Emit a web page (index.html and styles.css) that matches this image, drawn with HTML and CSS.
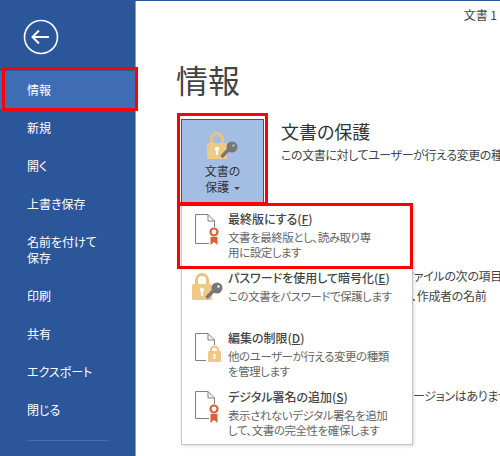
FILE: index.html
```html
<!DOCTYPE html>
<html lang="ja">
<head>
    <meta charset="UTF-8">
    <title>情報</title>
    <link rel="stylesheet" href="styles.css">
</head>
<body>
    <div class="app">
        <aside class="sidebar">
            <a class="back" href="#">
                <svg width="36" height="36" viewBox="0 0 36 36">
                    <circle cx="18" cy="18" r="16.500" fill="none" stroke="#fff" stroke-width="1.600"/>
                    <path d="M9.500 18H26M16 11.500L9.500 18L16 24.500" fill="none" stroke="#fff" stroke-width="2"/>
                </svg>
            </a>
            <nav class="nav">
                <a class="nav-item active" href="#">情報</a>
                <a class="nav-item" href="#">新規</a>
                <a class="nav-item" href="#">開く</a>
                <a class="nav-item" href="#">上書き保存</a>
                <a class="nav-item tall" href="#">名前を付けて<br>保存</a>
                <a class="nav-item" href="#">印刷</a>
                <a class="nav-item" href="#">共有</a>
                <a class="nav-item" href="#">エクスポート</a>
                <a class="nav-item" href="#">閉じる</a>
            </nav>
            <div class="nav-line"></div>
        </aside>

        <main class="content">
            <div class="doc-name">文書 1</div>
            <h1 class="title">情報</h1>

            <section class="row">
                <button class="protect-btn">
                    <svg class="btn-icon" width="31" height="28" viewBox="0 0 31 28">
                        <path d="M4.500 13V8a5.500 5.500 0 0 1 11 0v5" fill="none" stroke="#eec27c" stroke-width="3"/>
                        <rect x="0" y="12" width="20" height="16" rx="1.500" fill="#f0c987"/>
                        <circle cx="10" cy="18" r="2.200" fill="#fff"/>
                        <rect x="9" y="19" width="2" height="5" fill="#fff"/>
                        <path d="M24 16L14.500 26" stroke="#777" stroke-width="3.500"/>
                        <circle cx="25" cy="16" r="5.500" fill="#777"/>
                        <circle cx="26.500" cy="14.500" r="1.200" fill="#a3bde3"/>
                    </svg>
                    <span>文書の</span>
                    <span>保護 <i class="caret"></i></span>
                </button>
                <div class="row-text">
                    <h2>文書の保護</h2>
                    <p>この文書に対してユーザーが行える変更の種類を管理します。</p>
                </div>
            </section>

            <p class="behind behind-a">ファイルの次の項目を確認します。</p>
            <p class="behind behind-b">、作成者の名前</p>
            <p class="behind behind-c">バージョンはありません。</p>
        </main>

        <ul class="menu">
            <li class="menu-item">
                <svg class="menu-icon" width="34" height="36" viewBox="0 0 34 36">
                    <path d="M20.500 14V8L14 1.500H1.500V30.500H15M14 1.500V8H20.500" fill="none" stroke="#7f7f7f"/>
                    <circle cx="20" cy="19" r="3.500" fill="none" stroke="#d9603b" stroke-width="2.200"/>
                    <path d="M16.500 24H23.500V32L20 29L16.500 32Z" fill="#d9603b"/>
                </svg>
                <div>
                    <b>最終版にする(<u>F</u>)</b>
                    <p>文書を最終版とし、読み取り専<br>用に設定します</p>
                </div>
            </li>
            <li class="menu-item">
                <svg class="menu-icon lock-icon" width="37" height="36" viewBox="0 0 37 36">
                    <path d="M5.500 13V8a5.500 5.500 0 0 1 11 0v5" fill="none" stroke="#eec27c" stroke-width="3"/>
                    <rect x="1" y="12" width="20" height="16" rx="1.500" fill="#f0c987"/>
                    <circle cx="11" cy="18" r="2.200" fill="#fff"/>
                    <rect x="10" y="19" width="2" height="5" fill="#fff"/>
                    <path d="M25 16L15.500 26" stroke="#777" stroke-width="3.500"/>
                    <circle cx="26" cy="16" r="5.500" fill="#777"/>
                    <circle cx="27.500" cy="14.500" r="1.200" fill="#fff"/>
                </svg>
                <div>
                    <b>パスワードを使用して暗号化(<u>E</u>)</b>
                    <p>この文書をパスワードで保護します</p>
                </div>
            </li>
            <li class="menu-item">
                <svg class="menu-icon" width="34" height="36" viewBox="0 0 34 36">
                    <path d="M20.500 13V8L14 1.500H1.500V28.500H12M14 1.500V8H20.500" fill="none" stroke="#7f7f7f"/>
                    <path d="M17 19V18a3.500 3.500 0 0 1 7 0v1" fill="none" stroke="#eec27c" stroke-width="2"/>
                    <rect x="14" y="19" width="13" height="11" rx="1" fill="#f0c987"/>
                    <rect x="19.500" y="22" width="2" height="5" fill="#fff"/>
                </svg>
                <div>
                    <b>編集の制限(<u>D</u>)</b>
                    <p>他のユーザーが行える変更の種類<br>を管理します</p>
                </div>
            </li>
            <li class="menu-item">
                <svg class="menu-icon" width="34" height="36" viewBox="0 0 34 36">
                    <path d="M20.500 13V7L14 0.500H1.500V27.500H15M14 0.500V7H20.500" fill="none" stroke="#7f7f7f"/>
                    <circle cx="20" cy="18" r="3.500" fill="none" stroke="#d9603b" stroke-width="2.200"/>
                    <path d="M16.500 23H23.500V32L20 29L16.500 32Z" fill="#d9603b"/>
                </svg>
                <div>
                    <b>デジタル署名の追加(<u>S</u>)</b>
                    <p>表示されないデジタル署名を追加<br>して、文書の完全性を確保します</p>
                </div>
            </li>
        </ul>

        <div class="mark mark-nav"></div>
        <div class="mark mark-btn"></div>
        <div class="mark mark-item"></div>
    </div>
</body>
</html>
```

FILE: styles.css
```css
html, body {
    margin: 0;
    padding: 0;
}
body {
    font-family: "Noto Sans CJK JP", "Noto Sans", sans-serif;
    font-feature-settings: "palt";
    color: #444;
    background: #fff;
}
.app {
    position: relative;
    display: flex;
    width: 500px;
    height: 456px;
    overflow: hidden;
    border-top: 1px solid #2b579a;
    box-sizing: border-box;
}

/* left bar */
.sidebar {
    flex: 0 0 136px;
    box-sizing: border-box;
    background: #2b579a;
    border-right: 1px solid #7f9fd0;
}
.back {
    display: block;
    height: 52px;
    padding: 18px 0 0 23px;
}
.nav-item {
    display: flex;
    align-items: center;
    height: 38px;
    padding-left: 27px;
    color: #fff;
    font-size: 12px;
    line-height: 16px;
    text-decoration: none;
}
.nav-item.active {
    background: #3e6db5;
}
.nav-item.tall {
    height: 54px;
}
.nav-line {
    width: 82px;
    height: 1px;
    margin: 11px 0 0 27px;
    background: #3e6db5;
}

/* main area */
.content {
    position: relative;
    flex: 1;
    min-width: 0;
    padding-left: 42px;
}
.doc-name {
    position: absolute;
    top: 5px;
    right: 3px;
    font-size: 12px;
    color: #444;
}
.title {
    margin: 55px 0 0 -2px;
    font-size: 32px;
    font-weight: 400;
    line-height: 46px;
    color: #444;
}
.row {
    display: flex;
    gap: 17px;
    margin-top: 17px;
    margin-left: 3px;
}
.protect-btn {
    display: flex;
    flex: 0 0 83px;
    flex-direction: column;
    align-items: center;
    height: 90px;
    padding: 11px 0 0;
    box-sizing: border-box;
    background: #a3bde3;
    border: 1px solid #2b579a;
    border-bottom: 0;
    color: #333;
    font-family: inherit;
    font-feature-settings: inherit;
    font-size: 12px;
    line-height: 16px;
}
.btn-icon {
    margin-bottom: 4px;
}
.caret {
    display: inline-block;
    width: 0;
    height: 0;
    margin-left: 2px;
    vertical-align: middle;
    border: 3px solid transparent;
    border-top: 3px solid #444;
    border-bottom: 0;
}
.row-text h2 {
    margin: 0;
    font-size: 18px;
    font-weight: 400;
    line-height: 24px;
    white-space: nowrap;
    color: #333;
}
.row-text p {
    margin: 3px 0 0;
    font-size: 12px;
    line-height: 18px;
    letter-spacing: -0.4px;
    white-space: nowrap;
}
.behind {
    position: absolute;
    margin: 0;
    font-size: 12px;
    line-height: 18px;
    letter-spacing: -0.3px;
    white-space: nowrap;
}
.behind-a { top: 266px; left: 268px; }
.behind-b { top: 286px; left: 275px; }
.behind-c { top: 386px; left: 266px; }

/* dropdown */
.menu {
    position: absolute;
    top: 204px;
    left: 181px;
    width: 232px;
    height: 240px;
    margin: 0;
    padding: 5px 0 0;
    box-sizing: border-box;
    list-style: none;
    background: #fff;
    border: 1px solid #c6c6c6;
    box-shadow: 1px 1px 3px rgba(0, 0, 0, 0.15);
}
.menu-item {
    display: flex;
    height: 59.330px;
    padding-left: 12px;
    font-size: 12px;
    line-height: 16px;
}
.menu-icon {
    flex: 0 0 auto;
    margin-top: 2px;
}
.lock-icon {
    margin-left: -3px;
}
.menu-item b {
    display: block;
    font-weight: 500;
    white-space: nowrap;
    color: #444;
}
.menu-item p {
    margin: 3px 0 0;
    font-size: 11.500px;
    line-height: 15px;
    letter-spacing: -0.450px;
    white-space: nowrap;
    color: #666;
}

/* red marks laid over the screenshot */
.mark {
    position: absolute;
    box-sizing: border-box;
    border: 3px solid #f00;
}
.mark-nav { top: 66px; left: 2px; width: 136px; height: 44px; }
.mark-btn { top: 112px; left: 177px; width: 91px; height: 92px; }
.mark-item { top: 202px; left: 177px; width: 236px; height: 66px; }
```
